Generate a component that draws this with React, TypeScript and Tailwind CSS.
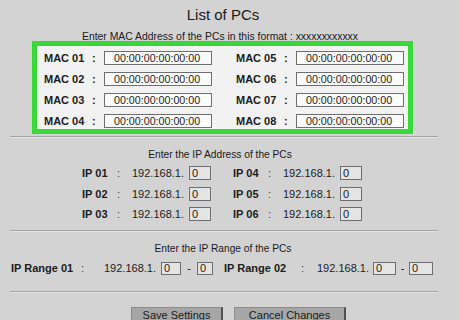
import React from "react";

const F = { fontFamily: '"Liberation Sans", Arial, sans-serif' };

function MacRow({ n }: { n: string }) {
  return (
    <div className="flex items-center h-[14px]">
      <div className="w-[48px] text-[11px] font-bold text-[#1c1c1c] leading-[14px] whitespace-nowrap">MAC {n}</div>
      <div className="w-[12px] text-[11px] font-bold text-[#1c1c1c] leading-[14px]">:</div>
      <div className="w-[108px] h-[14px] border border-[#6e6e6e] bg-[#fbfbfb] pl-[9px] text-[10.7px] leading-[12px] text-[#1c1c1c] whitespace-nowrap">
        00:00:00:00:00:00
      </div>
    </div>
  );
}

function IpRow({ n }: { n: string }) {
  return (
    <div className="flex items-center h-[14px]">
      <div className="w-[35px] text-[11px] font-bold text-[#1c1c1c] leading-[14px] whitespace-nowrap">IP {n}</div>
      <div className="w-[15px] text-[11px] text-[#444] leading-[14px]">:</div>
      <div className="w-[57px] text-[11px] text-[#1c1c1c] leading-[14px] whitespace-nowrap">192.168.1.</div>
      <div className="w-[22px] h-[14px] border border-[#6e6e6e] bg-[#e4e4e4] pl-[2px] text-[11px] leading-[12px] text-[#1c1c1c]">0</div>
    </div>
  );
}

function Sep({ mt }: { mt: string }) {
  return (
    <div className={`${mt} ml-[10px] w-[428px]`}>
      <div className="h-px bg-[#a4a4a4]" />
      <div className="h-px bg-[#e4e4e4]" />
    </div>
  );
}

function Box({ w, v = "0" }: { w: string; v?: string }) {
  return (
    <div className={`${w} h-[13px] border border-[#6e6e6e] bg-[#e4e4e4] pl-[2px] text-[11px] leading-[11px] text-[#1c1c1c]`}>{v}</div>
  );
}

export default function App() {
  return (
    <div style={F} className="w-[460px] h-[320px] overflow-hidden bg-[#d3d3d3] text-[#1c1c1c]">
      <div className="pt-[7px]">
        <div className="w-[446px] text-center text-[15px] leading-[15px] h-[15px] text-[#1a1a1a]">List of PCs</div>
      </div>
      <div className="mt-[10px] w-[440px] text-center text-[10.4px] leading-[10px] h-[10px] whitespace-nowrap text-[#1a1a1a]">
        Enter MAC Address of the PCs in this format : xxxxxxxxxxxx
      </div>
      <div className="relative -mt-[1px] ml-[32px] w-[381px] border-[5px] border-[#3ad83a] bg-[#f1f2f1] pt-[5px] pb-[1px] pl-[7px]">
        <div className="flex gap-[24px]">
          <div className="flex flex-col gap-[7px]">
            <MacRow n="01" />
            <MacRow n="02" />
            <MacRow n="03" />
            <MacRow n="04" />
          </div>
          <div className="flex flex-col gap-[7px]">
            <MacRow n="05" />
            <MacRow n="06" />
            <MacRow n="07" />
            <MacRow n="08" />
          </div>
        </div>
      </div>
      <Sep mt="mt-[2px]" />
      <div className="mt-[12px] w-[440px] text-center text-[10.2px] leading-[10px] h-[10px] whitespace-nowrap text-[#1a1a1a]">
        Enter the IP Address of the PCs
      </div>
      <div className="mt-[6px] pl-[82px] flex gap-[22px]">
        <div className="flex flex-col gap-[6.5px]">
          <IpRow n="01" />
          <IpRow n="02" />
          <IpRow n="03" />
        </div>
        <div className="flex flex-col gap-[6.5px]">
          <IpRow n="04" />
          <IpRow n="05" />
          <IpRow n="06" />
        </div>
      </div>
      <Sep mt="mt-[9px]" />
      <div className="mt-[12px] w-[446px] text-center text-[10.2px] leading-[10px] h-[10px] whitespace-nowrap text-[#1a1a1a]">
        Enter the IP Range of the PCs
      </div>
      <div className="mt-[8px] pl-[11px] flex items-center h-[13px] text-[11px] leading-[13px] whitespace-nowrap">
        <div className="w-[70px] font-bold">IP Range 01</div>
        <div className="w-[23px] text-[#444]">:</div>
        <div className="w-[57px]">192.168.1.</div>
        <Box w="w-[20px]" />
        <div className="w-[16px] text-center">-</div>
        <Box w="w-[16px]" />
        <div className="ml-[11px] w-[77px] font-bold">IP Range 02</div>
        <div className="w-[16px] text-[#444]">:</div>
        <div className="w-[56px]">192.168.1.</div>
        <Box w="w-[23px]" />
        <div className="w-[13px] text-center">-</div>
        <Box w="w-[24px]" />
      </div>
      <Sep mt="mt-[16px]" />
      <div className="mt-[14px] pl-[131px] flex gap-[11px]">
        <div className="w-[92px] h-[18px] bg-[#a6a6a6] border-l border-t border-[#8c8c8c] border-r-2 border-r-[#505050] text-center text-[11px] leading-[15px] text-[#1a1a1a]">
          Save Settings
        </div>
        <div className="w-[112px] h-[18px] bg-[#a6a6a6] border-l border-t border-[#8c8c8c] border-r-2 border-r-[#505050] text-center text-[11px] leading-[15px] text-[#1a1a1a]">
          Cancel Changes
        </div>
      </div>
    </div>
  );
}
